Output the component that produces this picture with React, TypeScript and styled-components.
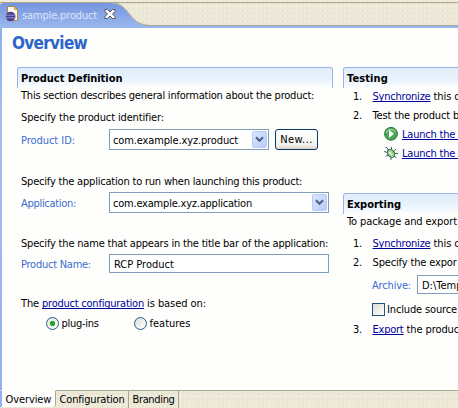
import React from 'react';
import styled, { createGlobalStyle, css } from 'styled-components';

const Global = createGlobalStyle`
  * { box-sizing: border-box; }
  body { margin: 0; overflow: hidden; background: #fefefc; }
`;

const dither = css`
  background-color: #ebe8da;
  background-image:
    radial-gradient(circle at 1px 1px, #f6f3d4 0.6px, transparent 0.9px),
    radial-gradient(circle at 3px 4px, #e2dfd2 0.6px, transparent 0.9px);
  background-size: 4px 5px, 5px 6px;
`;

const Window = styled.div`
  width: 458px;
  height: 408px;
  overflow: hidden;
  display: flex;
  flex-direction: column;
  font: 11px/14px 'DejaVu Sans Condensed', 'DejaVu Sans', sans-serif;
  color: #000;
  white-space: pre;
  cursor: default;
`;

const TabStrip = styled.header`
  ${dither}
  position: relative;
  flex: none;
  height: 28px;
`;

const TabShape = styled.svg`
  position: absolute;
  inset: 0;
`;

const TabContent = styled.div`
  position: relative;
  display: flex;
  padding: 6px 0 0 5px;
  color: #dce6fa;
`;

const TabTitle = styled.span`
  width: 83px;
  padding: 3px 0 0 1px;
  letter-spacing: -0.15px;
`;

const Frame = styled.main`
  flex: none;
  height: 362px;
  padding-left: 2px;
  background: linear-gradient(#90aeea, #a3bfee 25%, #94b0ea) left / 2px 100% no-repeat #fefefc;
`;

const Title = styled.h1`
  margin: 0;
  height: 39px;
  padding: 5px 0 0 10px;
  font: bold 17px/20px 'DejaVu Sans Condensed', sans-serif;
  letter-spacing: -0.7px;
  color: #2d66c8;
`;

const Columns = styled.div`
  display: flex;
  gap: 10px;
  padding-left: 15px;
`;

const Column = styled.div<{ $width: number }>`
  flex: none;
  width: ${(p) => p.$width}px;
`;

const Section = styled.section<{ $height?: number }>`
  height: ${(p) => (p.$height ? p.$height + 'px' : 'auto')};
`;

const SectionTitle = styled.h2<{ $ls: number }>`
  margin: 0;
  height: 21px;
  padding: 4px 0 0 3px;
  border: 1px solid #98b4ea;
  border-bottom: 0;
  border-radius: 3px 3px 0 0;
  background: linear-gradient(#e2edfa, #e6f1fc 50%, #fdfefe 98%);
  font: inherit;
  font-weight: bold;
  letter-spacing: ${(p) => p.$ls}px;
`;

const Row = styled.div<{ $top: number; $height?: number; $left?: number }>`
  display: flex;
  align-items: center;
  height: ${(p) => p.$height ?? 14}px;
  margin-top: ${(p) => p.$top}px;
  padding-left: ${(p) => p.$left ?? 4}px;
`;

const Text = styled.span<{ $ls?: number; $width?: number }>`
  flex: none;
  padding-top: 2px;
  letter-spacing: ${(p) => p.$ls ?? -0.2}px;
  width: ${(p) => (p.$width ? p.$width + 'px' : 'auto')};
`;

const FieldLabel = styled(Text)`
  color: #3a6ccf;
`;

const Link = styled(Text)`
  color: #00009c;
  text-decoration: underline;
  text-decoration-thickness: 1px;
  text-underline-offset: 1px;
  text-decoration-skip-ink: none;
`;

const Field = styled.div<{ $width: number; $height: number; $pad: number }>`
  flex: none;
  display: flex;
  align-items: center;
  justify-content: space-between;
  width: ${(p) => p.$width}px;
  height: ${(p) => p.$height}px;
  padding: 0 1px 0 ${(p) => p.$pad}px;
  border: 1px solid #7f9db9;
  background: #fff;
`;

const DropButton = styled.span`
  display: flex;
  align-items: center;
  justify-content: center;
  width: 15px;
  height: 17px;
  border: 1px solid #b8cbf6;
  border-radius: 2px;
  background: linear-gradient(135deg, #dbe6fe, #b9cdf9);
`;

const Button = styled.button`
  width: 43px;
  height: 21px;
  margin-left: 6px;
  padding: 1px 0 0;
  border: 1px solid #0c3868;
  border-radius: 3px;
  background: linear-gradient(#fff, #f2f1e9 80%, #d9d3c6);
  font: inherit;
  letter-spacing: 0.45px;
  color: #000;
`;

const Radio = styled.span<{ $on?: boolean }>`
  flex: none;
  width: 13px;
  height: 13px;
  border: 1px solid #285a8a;
  border-radius: 50%;
  background: ${(p) =>
    p.$on
      ? 'radial-gradient(circle, #24a424 0 2.2px, transparent 3px), linear-gradient(135deg, #e4e4df, #fff)'
      : 'linear-gradient(135deg, #dcdcd7, #fff)'};
`;

const RadioLabel = styled(Text)`
  margin-left: 2.5px;
`;

const Check = styled.span`
  flex: none;
  width: 13px;
  height: 13px;
  margin-right: 2px;
  border: 1px solid #1c5180;
  background: linear-gradient(135deg, #dcdcd7, #fff);
`;

const IconSlot = styled.span`
  flex: none;
  width: 19px;
  height: 16px;
`;

const PageTabs = styled.nav`
  ${dither}
  flex: none;
  display: flex;
  height: 18px;
`;

const PageTab = styled.span<{ $width: number; $pad: number; $ls: number; $active?: boolean }>`
  flex: none;
  width: ${(p) => p.$width}px;
  padding: 2px 0 0 ${(p) => p.$pad}px;
  letter-spacing: ${(p) => p.$ls}px;
  border-right: 1px solid #a9a696;
  border-top: 1px solid ${(p) => (p.$active ? '#fefefc' : '#a9a696')};
  ${(p) =>
    p.$active &&
    css`
      height: 17px;
      border-left: 2px solid #94b0ea;
      border-bottom-right-radius: 3px;
      background: #fefefc;
    `}
`;

const TabsRest = styled.span`
  flex: 1;
  border-top: 1px solid #a9a696;
`;

const Chevron = () => (
  <svg width="9" height="7" viewBox="0 0 9 7">
    <path d="M1 1.2 4.5 4.7 8 1.2" fill="none" stroke="#4d6185" strokeWidth="2.1" />
  </svg>
);

const ProductIcon = () => (
  <svg width="16" height="16" viewBox="0 0 16 16">
    <path d="M2.5.5h7l3 3v11h-10z" fill="#fffdf2" stroke="#a8863c" />
    <path d="M9.5.5v3h3z" fill="#e8b850" stroke="#b98a30" strokeWidth=".7" />
    <circle cx="5.6" cy="10.5" r="4.8" fill="#4a3f94" />
    <path d="M.2 9.2h10.8M.2 11.8h10.8" stroke="#a9a5dc" strokeWidth=".8" />
  </svg>
);

const CloseIcon = () => (
  <svg width="12" height="12" viewBox="0 0 12 12">
    <path
      d="M1 1.5h2.5L6 4l2.5-2.500H11v2L8.500 6 11 8.500v2H8.500L6 8l-2.500 2.500H1v-2L3.500 6 1 3.500z"
      fill="#fff"
      stroke="#565656"
    />
  </svg>
);

const RunIcon = () => (
  <svg width="16" height="16" viewBox="0 0 16 16">
    <circle cx="8" cy="7.8" r="6.4" fill="#4ca455" stroke="#227338" />
    <path d="M3.3 7A5 5 0 0 1 12.5 6" fill="none" stroke="#9bd09c" strokeWidth="1.2" />
    <path d="M6 3.7v8.3l5-4.15z" fill="#fff" />
  </svg>
);

const BugIcon = () => (
  <svg width="16" height="16" viewBox="0 0 16 16">
    <path
      d="M5.500 5.500 4 2.500M8.500 4.500V2M11 6l2-2M4.500 7.500 1 6.500M5 10l-2.500 1.500M11.500 8.500H15M11 11l2.500 2M8 12.500V15M4 2.500H2.500"
      fill="none"
      stroke="#2a5454"
      strokeWidth=".9"
    />
    <ellipse cx="8" cy="8.4" rx="3.3" ry="4.3" transform="rotate(-38 8 8.4)" fill="#a4d08c" stroke="#2b6858" />
    <path d="M6.3 7 9 10" stroke="#e4f6cc" strokeWidth="1.4" />
  </svg>
);

export default function App() {
  return (
    <Window>
      <Global />
      <TabStrip>
        <TabShape width="458" height="28">
          <defs>
            <linearGradient id="tab" x1="0" y1="0" x2="0" y2="1">
              <stop offset="0" stopColor="#7695df" />
              <stop offset="1" stopColor="#9ab8ee" />
            </linearGradient>
          </defs>
          <path d="M0 2.500H458M140 25.500H458" stroke="#a9a696" />
          <path d="M0 28V5L3 3H110C131 3 127 26 151 26H458V28Z" fill="url(#tab)" />
          <path d="M151 26H458V28H151Z" fill="#98b8ec" />
          <path d="M0 5 3 2.500H110C131 2.500 127 25.500 151 25.500" fill="none" stroke="#a9a696" />
        </TabShape>
        <TabContent>
          <ProductIcon />
          <TabTitle>sample.product</TabTitle>
          <Row $top={2} $height={12} $left={0}>
            <CloseIcon />
          </Row>
        </TabContent>
      </TabStrip>
      <Frame>
        <Title>Overview</Title>
        <Columns>
          <Column $width={316}>
            <SectionTitle $ls={-0.04}>Product Definition</SectionTitle>
            <Row $top={0}>
              <Text $ls={-0.21}>This section describes general information about the product:</Text>
            </Row>
            <Row $top={8}>
              <Text $ls={-0.14}>Specify the product identifier:</Text>
            </Row>
            <Row $top={5} $height={21}>
              <FieldLabel $ls={-0.05} $width={88}>Product ID:</FieldLabel>
              <Field $width={160} $height={21} $pad={3}>
                <Text $ls={-0.13}>com.example.xyz.product</Text>
                <DropButton>
                  <Chevron />
                </DropButton>
              </Field>
              <Button>New...</Button>
            </Row>
            <Row $top={24}>
              <Text $ls={-0.2}>Specify the application to run when launching this product:</Text>
            </Row>
            <Row $top={4} $height={21}>
              <FieldLabel $ls={-0.3} $width={88}>Application:</FieldLabel>
              <Field $width={220} $height={21} $pad={3}>
                <Text $ls={-0.21}>com.example.xyz.application</Text>
                <DropButton>
                  <Chevron />
                </DropButton>
              </Field>
            </Row>
            <Row $top={23}>
              <Text $ls={-0.19}>Specify the name that appears in the title bar of the application:</Text>
            </Row>
            <Row $top={4} $height={19}>
              <FieldLabel $ls={-0.25} $width={88}>Product Name:</FieldLabel>
              <Field $width={220} $height={19} $pad={4}>
                <Text $ls={0}>RCP Product</Text>
              </Field>
            </Row>
            <Row $top={23}>
              <Text $ls={-0.14}>The </Text>
              <Link $ls={-0.23}>product configuration</Link>
              <Text $ls={-0.07}> is based on:</Text>
            </Row>
            <Row $top={6} $left={29}>
              <Radio $on />
              <RadioLabel $ls={-0.29} $width={72.5}>plug-ins</RadioLabel>
              <Radio />
              <RadioLabel $ls={0}>features</RadioLabel>
            </Row>
          </Column>
          <Column $width={240}>
            <Section $height={126}>
              <SectionTitle $ls={0.12}>Testing</SectionTitle>
              <Row $top={1} $left={10}>
                <Text $width={19.5}>1.</Text>
                <Link $ls={-0.21}>Synchronize</Link>
                <Text $ls={-0.1}> this c</Text>
              </Row>
              <Row $top={5} $left={10}>
                <Text $width={19.5}>2.</Text>
                <Text $ls={-0.15}>Test the product b</Text>
              </Row>
              <Row $top={5} $left={40}>
                <IconSlot>
                  <RunIcon />
                </IconSlot>
                <Link $ls={-0.21}>Launch the </Link>
              </Row>
              <Row $top={5} $left={40}>
                <IconSlot>
                  <BugIcon />
                </IconSlot>
                <Link $ls={-0.21}>Launch the </Link>
              </Row>
            </Section>
            <Section>
              <SectionTitle $ls={-0.02}>Exporting</SectionTitle>
              <Row $top={0}>
                <Text $ls={-0.1}>To package and export</Text>
              </Row>
              <Row $top={8} $left={10}>
                <Text $width={19.5}>1.</Text>
                <Link $ls={-0.21}>Synchronize</Link>
                <Text $ls={-0.1}> this c</Text>
              </Row>
              <Row $top={5} $left={10}>
                <Text $width={19.5}>2.</Text>
                <Text $ls={-0.15}>Specify the expor</Text>
              </Row>
              <Row $top={6} $height={19} $left={29}>
                <FieldLabel $ls={-0.17} $width={45}>Archive:</FieldLabel>
                <Field $width={120} $height={19} $pad={4}>
                  <Text $ls={0}>D:\Temp</Text>
                </Field>
              </Row>
              <Row $top={8} $left={29}>
                <Check />
                <Text $ls={-0.14}>Include source</Text>
              </Row>
              <Row $top={6} $left={10}>
                <Text $width={19.5}>3.</Text>
                <Link $ls={-0.23}>Export</Link>
                <Text $ls={-0.1}> the produc</Text>
              </Row>
            </Section>
          </Column>
        </Columns>
      </Frame>
      <PageTabs>
        <PageTab $active $width={56} $pad={3.5} $ls={-0.1}>Overview</PageTab>
        <PageTab $width={73} $pad={3.5} $ls={-0.16}>Configuration</PageTab>
        <PageTab $width={50} $pad={3.5} $ls={-0.35}>Branding</PageTab>
        <TabsRest />
      </PageTabs>
    </Window>
  );
}
